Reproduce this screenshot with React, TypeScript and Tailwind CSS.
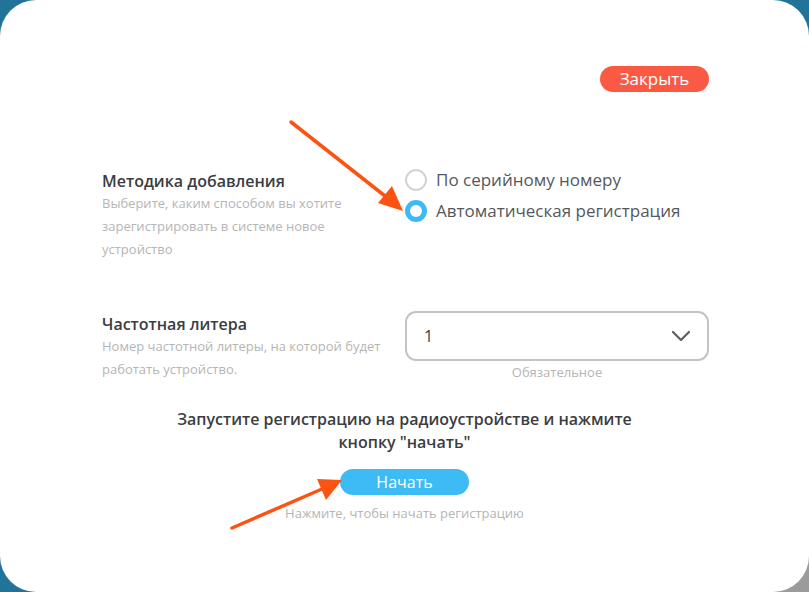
import React from "react";

export default function App() {
  return (
    <div className="relative w-[809px] h-[592px] overflow-hidden bg-[#22739a]" style={{ fontFamily: '"Open Sans", "Noto Sans", sans-serif' }}>
      <div className="absolute right-0 bottom-0 w-[60px] h-[60px] bg-[#9b9b9b]" />
      <div className="relative w-[809px] h-[592px] bg-white rounded-[36px] flex flex-col">
        <div className="flex justify-end pt-[66px] pr-[100px]">
          <button className="h-[26px] w-[109px] rounded-full bg-[#fa5a43] text-white text-[17px] leading-[26px]">Закрыть</button>
        </div>

        <div className="flex pl-[102px] mt-[77px]">
          <div className="w-[303px]">
            <div className="w-[288px] pt-[1px]">
              <div className="text-[16px] font-semibold text-[#3b3d40] leading-[22px]">Методика добавления</div>
              <div className="text-[13px] text-[#b5b5b5] leading-[23px]">Выберите, каким способом вы хотите зарегистрировать в системе новое устройство</div>
            </div>
          </div>
          <div className="flex flex-col gap-[9px]">
            <label className="flex items-center gap-[9px]">
              <span className="w-[22px] h-[22px] rounded-full border-[2px] border-[#d3d3d3] bg-white" />
              <span className="text-[17px] text-[#54585d] leading-[22px]">По серийному номеру</span>
            </label>
            <label className="flex items-center gap-[9px]">
              <span className="w-[22px] h-[22px] rounded-full border-[5px] border-[#3dbaf5] bg-white" />
              <span className="text-[17px] text-[#54585d] leading-[22px]">Автоматическая регистрация</span>
            </label>
          </div>
        </div>

        <div className="flex pl-[102px] mt-[50px]">
          <div className="w-[303px] pt-[2px]">
            <div className="w-[288px]">
              <div className="text-[16px] font-semibold text-[#3b3d40] leading-[22px]">Частотная литера</div>
              <div className="text-[13px] text-[#b5b5b5] leading-[23px]">Номер частотной литеры, на которой будет работать устройство.</div>
            </div>
          </div>
          <div className="w-[304px] flex flex-col items-center">
            <div className="w-[304px] h-[50px] rounded-[11px] border-[2px] border-[#c4c4c4] flex items-center justify-between pl-[17px] pr-[16px]">
              <span className="text-[16px] text-[#3b3d40]">1</span>
              <svg width="20" height="12" viewBox="0 0 20 12" fill="none">
                <path d="M2 2 L10 10 L18 2" stroke="#5a5e63" strokeWidth="2.2" strokeLinecap="round" strokeLinejoin="round" />
              </svg>
            </div>
            <div className="text-[13px] text-[#b5b5b5] leading-[18px] mt-[2px]">Обязательное</div>
          </div>
        </div>

        <div className="flex flex-col items-center mt-[27px]">
          <div className="text-[16px] font-semibold text-[#3b3d40] leading-[23px] text-center w-[480px]">Запустите регистрацию на радиоустройстве и нажмите кнопку "начать"</div>
          <button className="mt-[15px] h-[26px] w-[129px] rounded-full bg-[#3dbbf5] text-white text-[16px] leading-[26px]">Начать</button>
          <div className="mt-[9px] text-[13px] text-[#b5b5b5] leading-[18px]">Нажмите, чтобы начать регистрацию</div>
        </div>
      </div>

      <svg className="absolute left-0 top-0 pointer-events-none" width="809" height="592" viewBox="0 0 809 592">
        <line x1="291" y1="122" x2="385" y2="196" stroke="#fb5412" strokeWidth="3.5" strokeLinecap="round" />
        <polygon points="403,211 378,203 392,186" fill="#fb5412" />
        <line x1="232" y1="528" x2="322" y2="489" stroke="#fb5412" strokeWidth="3.5" strokeLinecap="round" />
        <polygon points="342,480 326,500 317,479" fill="#fb5412" />
      </svg>
    </div>
  );
}
